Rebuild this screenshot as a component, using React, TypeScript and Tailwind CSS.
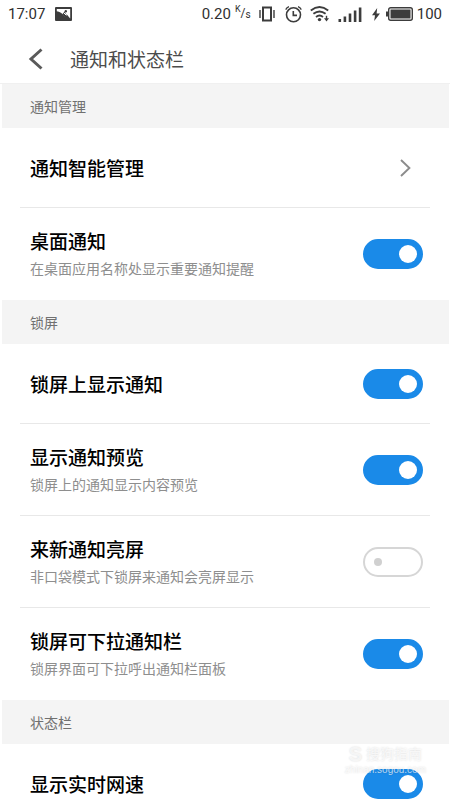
import { useState } from "react";

type Item = { title: string; note?: string; on?: boolean; link?: boolean };
type Group = { name: string; items: Item[] };

const groups: Group[] = [
  {
    name: "通知管理",
    items: [
      { title: "通知智能管理", link: true },
      { title: "桌面通知", note: "在桌面应用名称处显示重要通知提醒", on: true },
    ],
  },
  {
    name: "锁屏",
    items: [
      { title: "锁屏上显示通知", on: true },
      { title: "显示通知预览", note: "锁屏上的通知显示内容预览", on: true },
      { title: "来新通知亮屏", note: "非口袋模式下锁屏来通知会亮屏显示", on: false },
      { title: "锁屏可下拉通知栏", note: "锁屏界面可下拉呼出通知栏面板", on: true },
    ],
  },
  { name: "状态栏", items: [{ title: "显示实时网速", on: true }] },
];

function StatusBar() {
  return (
    <div className="flex h-7 shrink-0 items-center px-2 font-['Roboto',sans-serif] text-[15px] text-[#303030]">
      <span>17:07</span>
      <svg className="ml-2.5" width="17" height="14" viewBox="0 0 17 14" aria-hidden="true">
        <rect width="17" height="14" rx="1" fill="#3c3c3c" />
        <path d="M1.8 2 H15.2 V11.5 L11.8 7.4 L9.8 9.4 Q6 4.6 1.8 4.2 Z" fill="#fff" />
        <path d="M7.6 6.9 L9.6 4.4 L11 7.4 L12.2 8.6 L9.6 10 Z" fill="#3c3c3c" />
        <path d="M9 6 L11.4 8.4" stroke="#fff" strokeWidth="1" />
        <circle cx="10.8" cy="4.2" r="1.2" fill="#3c3c3c" />
      </svg>
      <span className="ml-auto">0.20</span>
      <span className="ml-1 flex text-xs leading-4">
        <span className="-mt-1 text-[9px]">K</span>/<span className="pt-0.5 text-[10px]">s</span>
      </span>
      <svg className="ml-2" width="16" height="16" viewBox="0 0 16 16" fill="none" stroke="#3c3c3c" aria-hidden="true">
        <rect x="4" y="1.5" width="8" height="13" strokeWidth="2" />
        <path d="M1 4V12M15 4V12" strokeWidth="1.4" />
      </svg>
      <svg className="ml-2.5" width="17" height="17" viewBox="0 0 17 17" fill="none" stroke="#3c3c3c" aria-hidden="true">
        <circle cx="8.5" cy="8.8" r="7" strokeWidth="1.6" />
        <path d="M8.3 5V9.4H12" strokeWidth="1.6" />
        <path d="M.7 3.6 Q1.8 1.6 4 .7M16.3 3.6 Q15.2 1.6 13 .7" strokeWidth="1.3" />
      </svg>
      <svg className="ml-2" width="20" height="16" viewBox="0 0 20 16" fill="none" stroke="#3c3c3c" aria-hidden="true">
        <path d="M.8 4.4 Q9.5 -2.4 18.2 4.4M3.4 7.8 Q9.5 3 15.6 7.8M6 11 Q9.5 8.2 13 11" strokeWidth="1.9" />
        <circle cx="9.5" cy="13.6" r="1.7" fill="#3c3c3c" stroke="none" />
        <path d="M14 12.2H19L16.5 15.4Z" fill="#3c3c3c" stroke="none" />
        <path d="M16.5 9.8V13" strokeWidth="1.4" />
      </svg>
      <svg className="ml-2" width="24" height="15" viewBox="0 0 24 15" fill="#3c3c3c" aria-hidden="true">
        <rect x="0.5" y="12" width="2.6" height="3" />
        <rect x="5.6" y="9.5" width="2.6" height="5.5" />
        <rect x="10.7" y="6.5" width="2.6" height="8.5" />
        <rect x="15.8" y="3.5" width="2.6" height="11.5" />
        <rect x="20.8" y="0.5" width="2.6" height="14.5" />
      </svg>
      <svg className="ml-2.5" width="8" height="13" viewBox="0 0 8 13" fill="#3c3c3c" aria-hidden="true">
        <path d="M5.2 0 L0 7.2 H3 L2.2 13 L8 5.4 H4.6 Z" />
      </svg>
      <svg className="ml-1.5" width="27" height="14" viewBox="0 0 27 14" aria-hidden="true">
        <rect x="2.7" y="0.7" width="23.6" height="12.6" rx="2" fill="none" stroke="#3c3c3c" strokeWidth="1.4" />
        <rect x="4.5" y="2.5" width="20" height="9" fill="#3c3c3c" />
        <rect x="0" y="4.5" width="2" height="5" fill="#3c3c3c" />
      </svg>
      <span className="ml-1">100</span>
    </div>
  );
}

function Row({ item }: { item: Item }) {
  const [on, setOn] = useState(Boolean(item.on));
  const size = item.note ? "h-[92px]" : "h-20";
  const box = `mx-5 flex items-center justify-between border-b border-[#e8e8e8] pl-2.5 pr-[7px] group-last:border-transparent ${size}`;

  if (item.link) {
    return (
      <li className="group">
        <a href="#smart" className={box}>
          <span className="text-[19px] font-medium leading-7 text-black">{item.title}</span>
          <svg className="mr-3" width="11" height="18" viewBox="0 0 11 18" fill="none" stroke="#8c8c8c" strokeWidth="1.9" aria-hidden="true">
            <path d="M1 1 L9.4 9 L1 17" />
          </svg>
        </a>
      </li>
    );
  }
  return (
    <li className="group">
      <label className={box}>
        <span className="flex flex-col">
          <span className="text-[19px] font-medium leading-7 text-black">{item.title}</span>
          {item.note && <span className="text-sm leading-[26px] text-[#8e8e8e]">{item.note}</span>}
        </span>
        <input
          type="checkbox"
          role="switch"
          checked={on}
          onChange={(e) => setOn(e.target.checked)}
          className="flex h-[30px] w-[60px] shrink-0 appearance-none items-center rounded-full border-2 border-[#d6d6d6] bg-white px-[9px] before:size-2 before:rounded-full before:bg-[#d0d0d0] checked:justify-end checked:border-[#1a8ae8] checked:bg-[#1a8ae8] checked:px-1 checked:before:size-[18px] checked:before:bg-white"
        />
      </label>
    </li>
  );
}

export default function App() {
  return (
    <div className="relative flex h-screen flex-col overflow-hidden bg-white font-['Noto_Sans_CJK_SC',sans-serif]">
      <StatusBar />
      <header className="flex h-14 shrink-0 items-center border-b border-[#f0f0f0] pl-7 pt-1.5">
        <button type="button" aria-label="返回">
          <svg width="16" height="22" viewBox="0 0 16 22" fill="none" stroke="#5a5a5a" strokeWidth="3" aria-hidden="true">
            <path d="M13.5 1.5 L3 11 L13.5 20.5" />
          </svg>
        </button>
        <h1 className="ml-[26px] text-[19px] leading-7 text-[#4c4c4c]">{"通知和状态栏"}</h1>
      </header>
      <main className="min-h-0 flex-1 overflow-y-auto [scrollbar-width:none]">
        {groups.map((g) => (
          <section key={g.name}>
            <h2 className="ml-0.5 mr-px flex h-11 items-center bg-[#f4f4f4] pl-7 text-sm text-[#707070]">{g.name}</h2>
            <ul>
              {g.items.map((item) => (
                <Row key={item.title} item={item} />
              ))}
            </ul>
          </section>
        ))}
      </main>
      <div className="pointer-events-none absolute bottom-6 right-6 flex flex-col items-center font-['Liberation_Sans','Noto_Sans_CJK_SC',sans-serif] text-white/70 [text-shadow:0_0_2px_#00000028]">
        <span className="flex items-center gap-1 text-sm leading-5">
          <b className="text-xl leading-5">S</b>搜狗指南
        </span>
        <span className="text-[10px] leading-3">zhinan.sogou.com</span>
      </div>
    </div>
  );
}
